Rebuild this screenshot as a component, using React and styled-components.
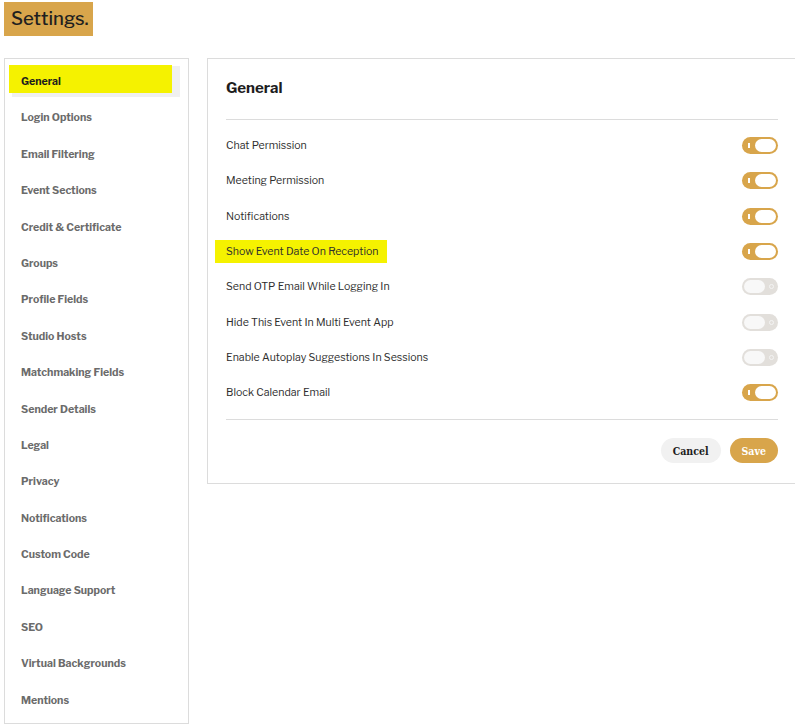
import React, { useState } from 'react';
import styled, { createGlobalStyle } from 'styled-components';

const Global = createGlobalStyle`
  html, body {
    margin: 0;
    padding: 0;
    background: #ffffff;
    font-family: "Libre Franklin", Lato, "Liberation Sans", sans-serif;
  }
`;

const Page = styled.div`
  width: 795px;
  height: 725px;
  padding: 2px 0 0 4px;
  box-sizing: border-box;
  overflow: hidden;
`;

const Title = styled.h1`
  display: inline-block;
  margin: 0;
  padding: 6px 6px 6px 7px;
  width: 89px;
  height: 34px;
  box-sizing: border-box;
  background: #d8a54b;
  color: #1f1f1f;
  font-size: 18.5px;
  font-weight: 500;
  line-height: 22px;
`;

const Body = styled.div`
  display: flex;
  align-items: flex-start;
  gap: 18px;
  margin-top: 22px;
`;

const Sidebar = styled.ul`
  list-style: none;
  margin: 0;
  padding: 7px 8px 6px 7px;
  width: 185px;
  height: 666px;
  box-sizing: border-box;
  border: 1px solid #dcdcdc;
`;

const NavItem = styled.li`
  position: relative;
  height: 31px;
  margin-bottom: 5.4px;
  padding-left: 9px;
  display: flex;
  align-items: center;
  font-size: 10.6px;
  font-weight: 700;
  color: ${p => (p.$active ? '#1d1d1d' : '#6b6b6b')};
  background: ${p => (p.$active ? '#f0f0f0' : 'transparent')};

  &::before {
    content: '';
    display: ${p => (p.$active ? 'block' : 'none')};
    position: absolute;
    left: -3px;
    top: -1px;
    width: 163px;
    height: 28px;
    background: #f5f200;
  }
`;

const NavLabel = styled.span`
  position: relative;
`;

const Panel = styled.section`
  flex: 1;
  border: 1px solid #dcdcdc;
  border-right: none;
  padding: 18px 17px 19px 18px;
  height: 426px;
  box-sizing: border-box;
`;

const PanelTitle = styled.h2`
  margin: 0;
  font-size: 15px;
  font-weight: 700;
  color: #1d1d1d;
  line-height: 22px;
`;

const Divider = styled.div`
  height: 1px;
  background: #dcdcdc;
  margin: ${p => p.$m};
`;

const Row = styled.div`
  display: flex;
  align-items: center;
  justify-content: space-between;
  height: 35.3px;
`;

const Label = styled.span`
  font-size: 10.6px;
  color: #2e2e2e;
  padding: 5px 9px 5px 11px;
  margin-left: -11px;
  background: ${p => (p.$mark ? '#f5f200' : 'transparent')};
`;

const Toggle = styled.button`
  position: relative;
  width: 36px;
  height: 17px;
  padding: 0;
  border: none;
  border-radius: 9px;
  cursor: pointer;
  background: ${p => (p.$on ? '#d8a54b' : '#e2dfdb')};
`;

const Knob = styled.span`
  position: absolute;
  top: 2px;
  ${p => (p.$on ? 'right: 2px;' : 'left: 2px;')}
  width: 21px;
  height: 13px;
  border-radius: 7px;
  background: ${p => (p.$on ? '#ffffff' : '#f8f8f8')};
`;

const OnMark = styled.span`
  position: absolute;
  left: 6px;
  top: 6px;
  width: 1.5px;
  height: 5px;
  background: #ffffff;
`;

const OffMark = styled.span`
  position: absolute;
  right: 4px;
  top: 6px;
  width: 5px;
  height: 5px;
  border: 1px solid #f4f4f4;
  border-radius: 50%;
  box-sizing: border-box;
`;

const Actions = styled.div`
  display: flex;
  justify-content: flex-end;
  gap: 9px;
  margin-top: 18px;
`;

const Btn = styled.button`
  height: 25px;
  padding: 0 12px;
  border: none;
  border-radius: 13px;
  font-family: "DejaVu Serif Condensed", "DejaVu Serif", "Liberation Serif", serif;
  font-stretch: condensed;
  font-weight: 700;
  font-size: 10.5px;
  cursor: pointer;
  color: ${p => (p.$primary ? '#ffffff' : '#1d1d1d')};
  background: ${p => (p.$primary ? '#d8a54b' : '#f1f1f1')};
`;

const nav = [
  'General', 'Login Options', 'Email Filtering', 'Event Sections', 'Credit & Certificate',
  'Groups', 'Profile Fields', 'Studio Hosts', 'Matchmaking Fields', 'Sender Details',
  'Legal', 'Privacy', 'Notifications', 'Custom Code', 'Language Support', 'SEO',
  'Virtual Backgrounds', 'Mentions',
];

const initial = [
  { label: 'Chat Permission', on: true },
  { label: 'Meeting Permission', on: true },
  { label: 'Notifications', on: true },
  { label: 'Show Event Date On Reception', on: true, mark: true },
  { label: 'Send OTP Email While Logging In', on: false },
  { label: 'Hide This Event In Multi Event App', on: false },
  { label: 'Enable Autoplay Suggestions In Sessions', on: false },
  { label: 'Block Calendar Email', on: true },
];

export default function App() {
  const [settings, setSettings] = useState(initial);

  const flip = i => {
    setSettings(settings.map((s, j) => (j === i ? { ...s, on: !s.on } : s)));
  };

  return (
    <Page>
      <Global />
      <Title>Settings.</Title>
      <Body>
        <Sidebar>
          {nav.map((n, i) => (
            <NavItem key={n} $active={i === 0}>
              <NavLabel>{n}</NavLabel>
            </NavItem>
          ))}
        </Sidebar>
        <Panel>
          <PanelTitle>General</PanelTitle>
          <Divider $m="20px 0 8px" />
          {settings.map((s, i) => (
            <Row key={s.label}>
              <Label $mark={s.mark}>{s.label}</Label>
              <Toggle $on={s.on} onClick={() => flip(i)}>
                {s.on ? <OnMark /> : <OffMark />}
                <Knob $on={s.on} />
              </Toggle>
            </Row>
          ))}
          <Divider $m="9px 0 0" />
          <Actions>
            <Btn>Cancel</Btn>
            <Btn $primary>Save</Btn>
          </Actions>
        </Panel>
      </Body>
    </Page>
  );
}
